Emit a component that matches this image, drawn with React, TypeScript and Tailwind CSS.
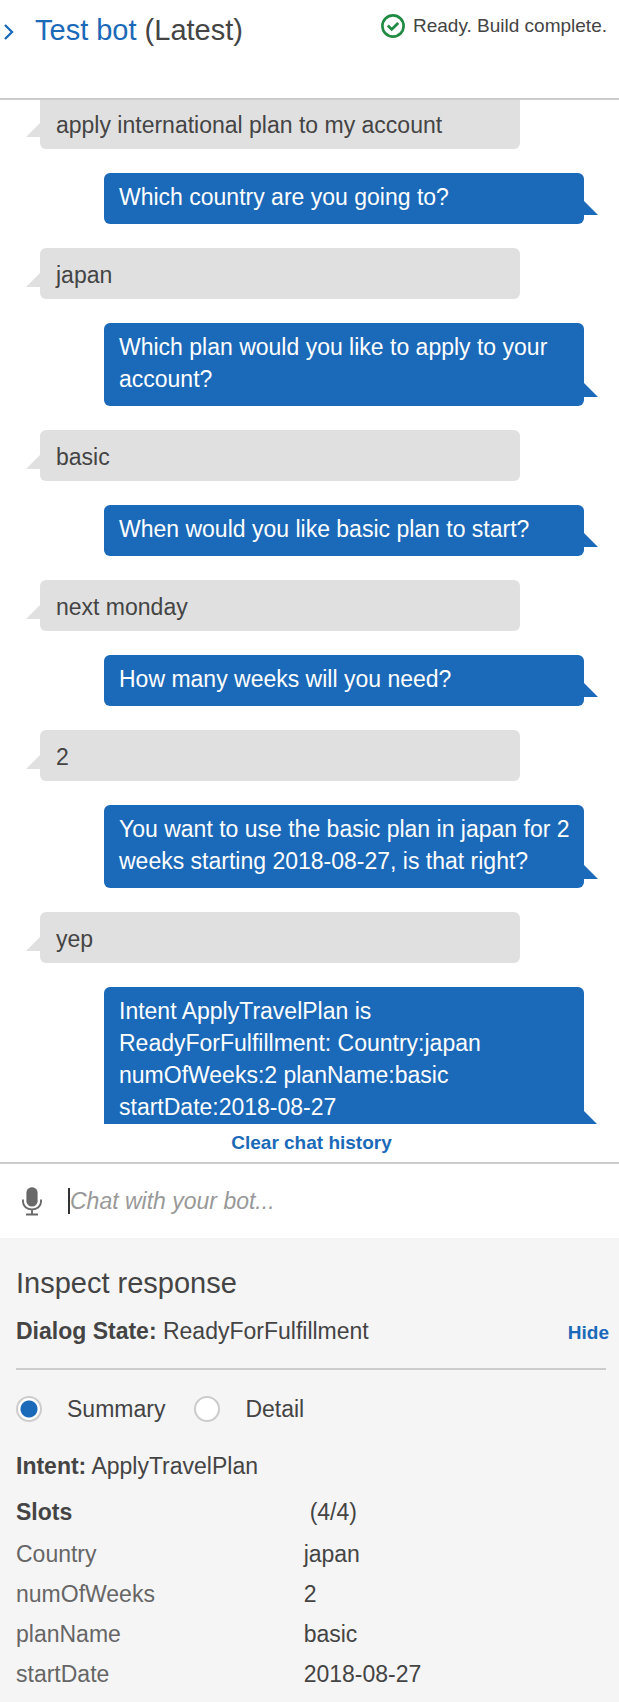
import { useState } from "react";

type Message = { from: "user" | "bot"; text: string };

const messages: Message[] = [
  { from: "user", text: "apply international plan to my account" },
  { from: "bot", text: "Which country are you going to?" },
  { from: "user", text: "japan" },
  { from: "bot", text: "Which plan would you like to apply to your account?" },
  { from: "user", text: "basic" },
  { from: "bot", text: "When would you like basic plan to start?" },
  { from: "user", text: "next monday" },
  { from: "bot", text: "How many weeks will you need?" },
  { from: "user", text: "2" },
  {
    from: "bot",
    text: "You want to use the basic plan in japan for 2 weeks starting 2018-08-27, is that right?",
  },
  { from: "user", text: "yep" },
  {
    from: "bot",
    text: "Intent ApplyTravelPlan is ReadyForFulfillment: Country:japan numOfWeeks:2 planName:basic startDate:2018-08-27",
  },
];

const slots = [
  { name: "Country", value: "japan" },
  { name: "numOfWeeks", value: "2" },
  { name: "planName", value: "basic" },
  { name: "startDate", value: "2018-08-27" },
];

function Bubble({ from, text }: Message) {
  if (from === "user") {
    return (
      <li className="relative ml-10 mr-[99px] rounded-md bg-[#e0e0e0] px-4 pt-[11px] pb-2 text-[#444]">
        {text}
        <span className="absolute right-full bottom-3 border-b-[14px] border-l-[14px] border-b-[#e0e0e0] border-l-transparent" />
      </li>
    );
  }
  return (
    <li className="relative ml-[104px] mr-[35px] rounded-md bg-[#1b69b9] pt-2 pr-2 pb-[11px] pl-[15px] text-white">
      {text}
      <span className="absolute bottom-[9px] left-full border-r-[14px] border-b-[14px] border-r-transparent border-b-[#1b69b9]" />
    </li>
  );
}

function Chevron() {
  return (
    <svg viewBox="0 0 10 16" className="h-4 w-[10px]" fill="none" stroke="#1b69b9" strokeWidth="2.3" aria-hidden="true">
      <path d="M1 1 8 8 1 15" />
    </svg>
  );
}

function CheckCircle() {
  return (
    <svg viewBox="0 0 24 24" className="size-6" fill="none" stroke="#1f8a42" aria-hidden="true">
      <circle cx="12" cy="12" r="10.6" strokeWidth="2.6" />
      <path d="m6.8 11.6 3.9 3.8 6.5-6.4" strokeWidth="2.8" />
    </svg>
  );
}

function Microphone() {
  return (
    <svg viewBox="0 0 20 29" className="h-[29px] w-5" fill="none" aria-hidden="true">
      <rect x="4.4" y="0.2" width="11.2" height="19.4" rx="5.4" fill="#696969" />
      <path d="M1 12.5v2.2c0 4.6 3.9 7.8 9 7.8s9-3.2 9-7.8v-2.2M10 22.5v4.6M4 27.5h12" stroke="#696969" strokeWidth="1.9" />
    </svg>
  );
}

function RadioOption({
  label,
  checked,
  onChange,
}: {
  label: string;
  checked: boolean;
  onChange: () => void;
}) {
  return (
    <label className="flex items-center gap-[25px]">
      <input
        type="radio"
        name="view"
        checked={checked}
        onChange={onChange}
        className="size-[26px] appearance-none rounded-full border-2 border-[#ccc] bg-white bg-[radial-gradient(circle,#1b69b9_8px,transparent_9px)] bg-size-[0_0] bg-center bg-no-repeat checked:bg-size-[100%_100%]"
      />
      {label}
    </label>
  );
}

export default function App() {
  const [view, setView] = useState("Summary");

  return (
    <div className="flex h-screen flex-col bg-white font-['Liberation_Sans',Arial,sans-serif] text-[23px] leading-8 text-[#444]">
      <header className="flex h-[100px] shrink-0 items-start justify-between border-b-2 border-[#ccc] pr-3 pl-1">
        <div className="flex items-center gap-[21px] pt-3">
          <button type="button" aria-label="Collapse" className="pt-1">
            <Chevron />
          </button>
          <h1 className="text-[29px] leading-9">
            <a href="#bot" className="text-[#1b69b9]">Test bot</a> (Latest)
          </h1>
        </div>
        <p className="flex items-center gap-2 pt-3 text-[19px] leading-7">
          <CheckCircle />
          Ready. Build complete.
        </p>
      </header>

      <main className="min-h-0 flex-1 overflow-hidden">
        <ul className="-mt-0.5 flex flex-col gap-6 [&>li:first-child]:rounded-t-none">
          {messages.map((message) => (
            <Bubble key={message.text} {...message} />
          ))}
        </ul>
      </main>

      <div className="flex h-10 shrink-0 justify-center border-b-2 border-[#ccc] pl-1">
        <button type="button" className="text-[19px] font-bold text-[#1b69b9]">
          Clear chat history
        </button>
      </div>

      <div className="flex h-[74px] shrink-0 items-center gap-[26px] pr-4 pl-[22px]">
        <button type="button" aria-label="Speak">
          <Microphone />
        </button>
        <span className="flex flex-1 items-center">
          <span className="h-[26px] w-0.5 shrink-0 bg-[#333]" />
          <input
            type="text"
            aria-label="Chat with your bot"
            placeholder="Chat with your bot..."
            className="min-w-0 flex-1 outline-none placeholder:text-[#999] placeholder:italic"
          />
        </span>
      </div>

      <section className="shrink-0 bg-[#f5f5f5] px-4 pt-[27px] pb-2">
        <h2 className="text-[29px] leading-9">Inspect response</h2>
        <div className="-mr-1.5 flex items-center justify-between pt-3">
          <p>
            <b>Dialog State:</b> ReadyForFulfillment
          </p>
          <button type="button" className="pt-1 text-[19px] font-bold text-[#1b69b9]">
            Hide
          </button>
        </div>
        <hr className="mt-[19px] -mr-[3px] border-t-2 border-[#ccc]" />
        <div className="flex gap-[29px] pt-[23px]">
          {["Summary", "Detail"].map((label) => (
            <RadioOption key={label} label={label} checked={view === label} onChange={() => setView(label)} />
          ))}
        </div>
        <p className="pt-[25px]">
          <b>Intent:</b> ApplyTravelPlan
        </p>
        <table className="mt-2 w-full text-left">
          <thead>
            <tr className="h-11">
              <th className="w-[49%] p-0 font-bold">Slots</th>
              <td className="py-0 pl-[6px]">(4/4)</td>
            </tr>
          </thead>
          <tbody>
            {slots.map((slot) => (
              <tr key={slot.name} className="h-10">
                <th className="p-0 font-normal text-[#666]">{slot.name}</th>
                <td className="p-0">{slot.value}</td>
              </tr>
            ))}
          </tbody>
        </table>
      </section>
    </div>
  );
}
